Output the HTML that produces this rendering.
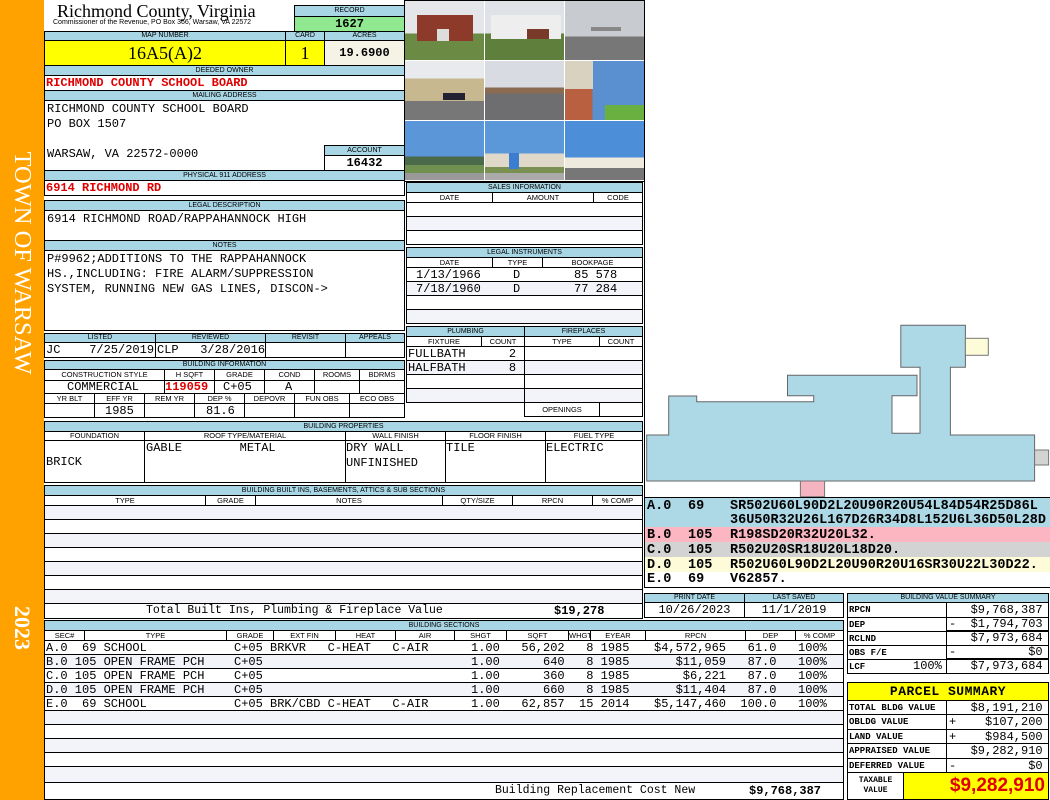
<!DOCTYPE html>
<html><head><meta charset="utf-8"><style>
*{margin:0;padding:0}
body{width:1050px;height:800px;position:relative;background:#fff;overflow:hidden;font-family:"Liberation Sans",sans-serif}
.a{position:absolute;box-sizing:border-box}
.h{position:absolute;box-sizing:border-box;background:#a9d6e5;border:1px solid #000;font-size:7px;text-align:center;white-space:nowrap;overflow:hidden}
.s{position:absolute;box-sizing:border-box;background:#fff;border:1px solid #000;font-size:7.5px;text-align:center;white-space:nowrap;overflow:hidden}
.b{position:absolute;box-sizing:border-box;border:1px solid #000;background:#fff}
.m{position:absolute;font-family:"Liberation Mono",monospace;font-size:12px;white-space:pre;line-height:14px}
.g{background:#f3f3fa}
.red{color:#e00000;font-weight:bold}
.ph{position:absolute;overflow:hidden}
.lg{position:absolute;font-family:"Liberation Mono",monospace;font-size:13.5px;font-weight:bold;white-space:pre;line-height:13px}
</style></head><body>

<div class="a" style="left:0;top:0;width:44px;height:800px;background:#ffa200"></div>
<div class="a" style="left:22px;top:263px;width:260px;height:26px;margin-left:-130px;margin-top:-13px;transform:rotate(90deg);color:#fff;font:24.5px 'Liberation Serif',serif;text-align:center;line-height:26px;white-space:nowrap">TOWN OF WARSAW</div>
<div class="a" style="left:22px;top:628px;width:70px;height:26px;margin-left:-35px;margin-top:-13px;transform:rotate(90deg);color:#fff;font:bold 22px 'Liberation Serif',serif;text-align:center;line-height:26px">2023</div>

<div class="a" style="left:57px;top:1px;font:18px 'Liberation Serif',serif;white-space:nowrap">Richmond County, Virginia</div>
<div class="a" style="left:53px;top:19px;font:7px 'Liberation Sans',sans-serif;white-space:nowrap">Commissioner of the Revenue, PO Box 366, Warsaw, VA 22572</div>
<div class="h" style="left:294px;top:5px;width:111px;height:12px;line-height:10px">RECORD</div>
<div class="b" style="left:294px;top:16px;width:111px;height:16px;background:#90e890;text-align:center;font:bold 12px/14px 'Liberation Mono',monospace">1627</div>

<div class="h" style="left:44px;top:31px;width:242px;height:10px;line-height:8px">MAP NUMBER</div>
<div class="h" style="left:285px;top:31px;width:40px;height:10px;line-height:8px">CARD</div>
<div class="h" style="left:324px;top:31px;width:81px;height:10px;line-height:8px">ACRES</div>
<div class="b" style="left:44px;top:40px;width:242px;height:26px;background:#ffff00;text-align:center;font:18px/24px 'Liberation Serif',serif">16A5(A)2</div>
<div class="b" style="left:285px;top:40px;width:40px;height:26px;background:#ffff00;text-align:center;font:18px/24px 'Liberation Serif',serif">1</div>
<div class="b" style="left:324px;top:40px;width:81px;height:26px;background:#f5f3e6;text-align:center;font:bold 12px/24px 'Liberation Mono',monospace">19.6900</div>

<div class="h" style="left:44px;top:65px;width:361px;height:11px;line-height:9px">DEEDED OWNER</div>
<div class="b" style="left:44px;top:75px;width:361px;height:16px"></div>
<div class="m red" style="left:46px;top:76px">RICHMOND COUNTY SCHOOL BOARD</div>
<div class="h" style="left:44px;top:90px;width:361px;height:11px;line-height:9px">MAILING ADDRESS</div>
<div class="b" style="left:44px;top:100px;width:361px;height:71px"></div>
<div class="m" style="left:47px;top:102px;line-height:15px">RICHMOND COUNTY SCHOOL BOARD
PO BOX 1507

WARSAW, VA 22572-0000</div>
<div class="h" style="left:324px;top:145px;width:81px;height:11px;line-height:9px">ACCOUNT</div>
<div class="b" style="left:324px;top:155px;width:81px;height:16px;text-align:center;font:bold 12px/14px 'Liberation Mono',monospace">16432</div>
<div class="h" style="left:44px;top:170px;width:361px;height:11px;line-height:9px">PHYSICAL 911 ADDRESS</div>
<div class="b" style="left:44px;top:180px;width:361px;height:16px"></div>
<div class="m red" style="left:46px;top:181px">6914 RICHMOND RD</div>

<div class="h" style="left:44px;top:200px;width:361px;height:11px;line-height:9px">LEGAL DESCRIPTION</div>
<div class="b" style="left:44px;top:210px;width:361px;height:31px"></div>
<div class="m" style="left:47px;top:212px">6914 RICHMOND ROAD/RAPPAHANNOCK HIGH</div>
<div class="h" style="left:44px;top:240px;width:361px;height:11px;line-height:9px">NOTES</div>
<div class="b" style="left:44px;top:250px;width:361px;height:81px"></div>
<div class="m" style="left:47px;top:252px;line-height:15px">P#9962;ADDITIONS TO THE RAPPAHANNOCK
HS.,INCLUDING: FIRE ALARM/SUPPRESSION
SYSTEM, RUNNING NEW GAS LINES, DISCON-&gt;</div>

<div class="h" style="left:44px;top:333px;width:112px;height:10px;line-height:8px">LISTED</div>
<div class="h" style="left:155px;top:333px;width:111px;height:10px;line-height:8px">REVIEWED</div>
<div class="h" style="left:265px;top:333px;width:81px;height:10px;line-height:8px">REVISIT</div>
<div class="h" style="left:345px;top:333px;width:60px;height:10px;line-height:8px">APPEALS</div>
<div class="b" style="left:44px;top:342px;width:112px;height:16px"></div>
<div class="b" style="left:155px;top:342px;width:111px;height:16px"></div>
<div class="b" style="left:265px;top:342px;width:81px;height:16px"></div>
<div class="b" style="left:345px;top:342px;width:60px;height:16px"></div>
<div class="m" style="left:46px;top:343px">JC    7/25/2019</div>
<div class="m" style="left:157px;top:343px">CLP   3/28/2016</div>

<div class="h" style="left:44px;top:360px;width:361px;height:10px;line-height:8px">BUILDING INFORMATION</div>
<div class="s" style="left:44px;top:369px;width:121px;height:12px;line-height:10px">CONSTRUCTION STYLE</div>
<div class="s" style="left:164px;top:369px;width:51px;height:12px;line-height:10px">H SQFT</div>
<div class="s" style="left:214px;top:369px;width:51px;height:12px;line-height:10px">GRADE</div>
<div class="s" style="left:264px;top:369px;width:51px;height:12px;line-height:10px">COND</div>
<div class="s" style="left:314px;top:369px;width:46px;height:12px;line-height:10px">ROOMS</div>
<div class="s" style="left:359px;top:369px;width:46px;height:12px;line-height:10px">BDRMS</div>
<div class="b" style="left:44px;top:380px;width:121px;height:14px"></div>
<div class="b" style="left:164px;top:380px;width:51px;height:14px"></div>
<div class="b" style="left:214px;top:380px;width:51px;height:14px"></div>
<div class="b" style="left:264px;top:380px;width:51px;height:14px"></div>
<div class="b" style="left:314px;top:380px;width:46px;height:14px"></div>
<div class="b" style="left:359px;top:380px;width:46px;height:14px"></div>
<div class="m" style="left:67px;top:380px">COMMERCIAL</div>
<div class="m red" style="left:165px;top:380px">119059</div>
<div class="m" style="left:223px;top:380px">C+05</div>
<div class="m" style="left:285px;top:380px">A</div>
<div class="s" style="left:44px;top:393px;width:51px;height:11px;line-height:9px">YR BLT</div>
<div class="s" style="left:94px;top:393px;width:51px;height:11px;line-height:9px">EFF YR</div>
<div class="s" style="left:144px;top:393px;width:51px;height:11px;line-height:9px">REM YR</div>
<div class="s" style="left:194px;top:393px;width:51px;height:11px;line-height:9px">DEP %</div>
<div class="s" style="left:244px;top:393px;width:51px;height:11px;line-height:9px">DEPOVR</div>
<div class="s" style="left:294px;top:393px;width:56px;height:11px;line-height:9px">FUN OBS</div>
<div class="s" style="left:349px;top:393px;width:56px;height:11px;line-height:9px">ECO OBS</div>
<div class="b" style="left:44px;top:403px;width:51px;height:15px"></div>
<div class="b" style="left:94px;top:403px;width:51px;height:15px"></div>
<div class="b" style="left:144px;top:403px;width:51px;height:15px"></div>
<div class="b" style="left:194px;top:403px;width:51px;height:15px"></div>
<div class="b" style="left:244px;top:403px;width:51px;height:15px"></div>
<div class="b" style="left:294px;top:403px;width:56px;height:15px"></div>
<div class="b" style="left:349px;top:403px;width:56px;height:15px"></div>
<div class="m" style="left:105px;top:404px">1985</div>
<div class="m" style="left:206px;top:404px">81.6</div>

<div class="a" style="left:404px;top:0;width:242px;height:182px;background:#fff;border:1px solid #000"></div>
<div class="ph" style="left:405px;top:1px;width:79px;height:59px;background:linear-gradient(#e4e6ea 0 55%,#6b8a44 55%)"><div class="a" style="left:12px;top:14px;width:56px;height:26px;background:#8e3a2a"></div><div class="a" style="left:32px;top:28px;width:12px;height:12px;background:#ddd"></div></div>
<div class="ph" style="left:485px;top:1px;width:79px;height:59px;background:linear-gradient(#dfe3e8 0 55%,#5f7f3c 55%)"><div class="a" style="left:6px;top:14px;width:70px;height:24px;background:#eeeeee"></div><div class="a" style="left:42px;top:28px;width:22px;height:10px;background:#7a3a2a"></div></div>
<div class="ph" style="left:565px;top:1px;width:79px;height:59px;background:linear-gradient(#c8ccd0 0 60%,#777 60%)"><div class="a" style="left:26px;top:26px;width:30px;height:4px;background:#888"></div></div>
<div class="ph" style="left:405px;top:61px;width:79px;height:59px;background:linear-gradient(#e8eaee 0 30%,#c8b890 30% 68%,#777 68%)"><div class="a" style="left:38px;top:32px;width:22px;height:7px;background:#223"></div></div>
<div class="ph" style="left:485px;top:61px;width:79px;height:59px;background:linear-gradient(#d8dce2 0 45%,#8a6a50 45% 55%,#6e6e70 55%)"></div>
<div class="ph" style="left:565px;top:61px;width:79px;height:59px;background:linear-gradient(90deg,#b86040 0 35%,#5a90d0 35%)"><div class="a" style="left:0;top:0;width:28px;height:28px;background:#d9d2c0"></div><div class="a" style="left:40px;top:44px;width:39px;height:15px;background:#6ab040"></div></div>
<div class="ph" style="left:405px;top:121px;width:79px;height:59px;background:linear-gradient(#5a96d8 0 60%,#4a6a4a 60% 75%,#709050 75% 88%,#999 88%)"></div>
<div class="ph" style="left:485px;top:121px;width:79px;height:59px;background:linear-gradient(#5b98da 0 55%,#e0d8c8 55% 78%,#7a9050 78% 88%,#aaa 88%)"><div class="a" style="left:24px;top:32px;width:10px;height:16px;background:#3b7dd0"></div></div>
<div class="ph" style="left:565px;top:121px;width:79px;height:59px;background:linear-gradient(#4d8ed8 0 62%,#eeeade 62% 80%,#777 80%)"></div>

<div class="h" style="left:406px;top:182px;width:237px;height:11px;line-height:9px">SALES INFORMATION</div>
<div class="s" style="left:406px;top:192px;width:87px;height:11px;line-height:9px">DATE</div>
<div class="s" style="left:492px;top:192px;width:102px;height:11px;line-height:9px">AMOUNT</div>
<div class="s" style="left:593px;top:192px;width:50px;height:11px;line-height:9px">CODE</div>
<div class="b" style="left:406px;top:202px;width:237px;height:15px"></div>
<div class="b g" style="left:406px;top:216px;width:237px;height:15px"></div>
<div class="b" style="left:406px;top:230px;width:237px;height:15px"></div>

<div class="h" style="left:406px;top:247px;width:237px;height:11px;line-height:9px">LEGAL INSTRUMENTS</div>
<div class="s" style="left:406px;top:257px;width:87px;height:11px;line-height:9px">DATE</div>
<div class="s" style="left:492px;top:257px;width:51px;height:11px;line-height:9px">TYPE</div>
<div class="s" style="left:542px;top:257px;width:101px;height:11px;line-height:9px">BOOKPAGE</div>
<div class="b" style="left:406px;top:267px;width:237px;height:15px"></div>
<div class="b g" style="left:406px;top:281px;width:237px;height:15px"></div>
<div class="b" style="left:406px;top:295px;width:237px;height:15px"></div>
<div class="b g" style="left:406px;top:309px;width:237px;height:15px"></div>
<div class="m" style="left:416px;top:268px">1/13/1966</div><div class="m" style="left:513px;top:268px">D</div><div class="m" style="left:574px;top:268px">85 578</div>
<div class="m" style="left:416px;top:282px">7/18/1960</div><div class="m" style="left:513px;top:282px">D</div><div class="m" style="left:574px;top:282px">77 284</div>

<div class="h" style="left:406px;top:326px;width:119px;height:11px;line-height:9px">PLUMBING</div>
<div class="h" style="left:524px;top:326px;width:119px;height:11px;line-height:9px">FIREPLACES</div>
<div class="s" style="left:406px;top:336px;width:76px;height:11px;line-height:9px">FIXTURE</div>
<div class="s" style="left:481px;top:336px;width:44px;height:11px;line-height:9px">COUNT</div>
<div class="s" style="left:524px;top:336px;width:76px;height:11px;line-height:9px">TYPE</div>
<div class="s" style="left:599px;top:336px;width:44px;height:11px;line-height:9px">COUNT</div>
<div class="b" style="left:406px;top:346px;width:119px;height:15px"></div>
<div class="b g" style="left:406px;top:360px;width:119px;height:15px"></div>
<div class="b" style="left:406px;top:374px;width:119px;height:15px"></div>
<div class="b g" style="left:406px;top:388px;width:119px;height:15px"></div>
<div class="b" style="left:524px;top:346px;width:119px;height:15px"></div>
<div class="b g" style="left:524px;top:360px;width:119px;height:15px"></div>
<div class="b" style="left:524px;top:374px;width:119px;height:15px"></div>
<div class="b g" style="left:524px;top:388px;width:119px;height:15px"></div>
<div class="s" style="left:524px;top:402px;width:76px;height:15px;line-height:13px">OPENINGS</div>
<div class="b" style="left:599px;top:402px;width:44px;height:15px"></div>
<div class="m" style="left:408px;top:347px">FULLBATH      2</div>
<div class="m" style="left:408px;top:361px">HALFBATH      8</div>

<div class="h" style="left:44px;top:421px;width:599px;height:11px;line-height:9px">BUILDING PROPERTIES</div>
<div class="s" style="left:44px;top:431px;width:101px;height:10px;line-height:8px">FOUNDATION</div>
<div class="s" style="left:144px;top:431px;width:202px;height:10px;line-height:8px">ROOF TYPE/MATERIAL</div>
<div class="s" style="left:345px;top:431px;width:101px;height:10px;line-height:8px">WALL FINISH</div>
<div class="s" style="left:445px;top:431px;width:101px;height:10px;line-height:8px">FLOOR FINISH</div>
<div class="s" style="left:545px;top:431px;width:98px;height:10px;line-height:8px">FUEL TYPE</div>
<div class="b" style="left:44px;top:440px;width:101px;height:43px"></div>
<div class="b" style="left:144px;top:440px;width:202px;height:43px"></div>
<div class="b" style="left:345px;top:440px;width:101px;height:43px"></div>
<div class="b" style="left:445px;top:440px;width:101px;height:43px"></div>
<div class="b" style="left:545px;top:440px;width:98px;height:43px"></div>
<div class="m" style="left:46px;top:455px">BRICK</div>
<div class="m" style="left:146px;top:441px">GABLE        METAL</div>
<div class="m" style="left:346px;top:441px;line-height:15px">DRY WALL
UNFINISHED</div>
<div class="m" style="left:446px;top:441px">TILE</div>
<div class="m" style="left:546px;top:441px">ELECTRIC</div>

<div class="h" style="left:44px;top:485px;width:599px;height:11px;line-height:9px">BUILDING BUILT INS, BASEMENTS, ATTICS &amp; SUB SECTIONS</div>
<div class="s" style="left:44px;top:495px;width:162px;height:11px;line-height:9px">TYPE</div>
<div class="s" style="left:205px;top:495px;width:51px;height:11px;line-height:9px">GRADE</div>
<div class="s" style="left:255px;top:495px;width:188px;height:11px;line-height:9px">NOTES</div>
<div class="s" style="left:442px;top:495px;width:71px;height:11px;line-height:9px">QTY/SIZE</div>
<div class="s" style="left:512px;top:495px;width:81px;height:11px;line-height:9px">RPCN</div>
<div class="s" style="left:592px;top:495px;width:51px;height:11px;line-height:9px">% COMP</div>
<div class="b g" style="left:44px;top:505px;width:599px;height:15px"></div>
<div class="b" style="left:44px;top:519px;width:599px;height:15px"></div>
<div class="b g" style="left:44px;top:533px;width:599px;height:15px"></div>
<div class="b" style="left:44px;top:547px;width:599px;height:15px"></div>
<div class="b g" style="left:44px;top:561px;width:599px;height:15px"></div>
<div class="b" style="left:44px;top:575px;width:599px;height:15px"></div>
<div class="b g" style="left:44px;top:589px;width:599px;height:15px"></div>
<div class="b" style="left:44px;top:603px;width:599px;height:16px"></div>
<div class="m" style="left:146px;top:604px;font-size:11.5px">Total Built Ins, Plumbing &amp; Fireplace Value</div>
<div class="m" style="left:554px;top:604px;font-weight:bold">$19,278</div>

<div class="h" style="left:44px;top:620px;width:800px;height:11px;line-height:9px">BUILDING SECTIONS</div>
<div class="s" style="left:44px;top:630px;width:41px;height:11px;line-height:9px">SEC#</div>
<div class="s" style="left:84px;top:630px;width:143px;height:11px;line-height:9px">TYPE</div>
<div class="s" style="left:226px;top:630px;width:48px;height:11px;line-height:9px">GRADE</div>
<div class="s" style="left:273px;top:630px;width:63px;height:11px;line-height:9px">EXT FIN</div>
<div class="s" style="left:335px;top:630px;width:61px;height:11px;line-height:9px">HEAT</div>
<div class="s" style="left:395px;top:630px;width:60px;height:11px;line-height:9px">AIR</div>
<div class="s" style="left:454px;top:630px;width:53px;height:11px;line-height:9px">SHGT</div>
<div class="s" style="left:506px;top:630px;width:63px;height:11px;line-height:9px">SQFT</div>
<div class="s" style="left:568px;top:630px;width:23px;height:11px;line-height:9px">WHGT</div>
<div class="s" style="left:590px;top:630px;width:56px;height:11px;line-height:9px">EYEAR</div>
<div class="s" style="left:645px;top:630px;width:101px;height:11px;line-height:9px">RPCN</div>
<div class="s" style="left:745px;top:630px;width:51px;height:11px;line-height:9px">DEP</div>
<div class="s" style="left:795px;top:630px;width:49px;height:11px;line-height:9px">% COMP</div>
<div class="b" style="left:44px;top:640px;width:800px;height:15px"></div>
<div class="b g" style="left:44px;top:654px;width:800px;height:15px"></div>
<div class="b" style="left:44px;top:668px;width:800px;height:15px"></div>
<div class="b g" style="left:44px;top:682px;width:800px;height:15px"></div>
<div class="b" style="left:44px;top:696px;width:800px;height:15px"></div>
<div class="b g" style="left:44px;top:710px;width:800px;height:15px"></div>
<div class="b" style="left:44px;top:724px;width:800px;height:15px"></div>
<div class="b g" style="left:44px;top:738px;width:800px;height:15px"></div>
<div class="b" style="left:44px;top:752px;width:800px;height:15px"></div>
<div class="b g" style="left:44px;top:766px;width:800px;height:17px"></div>
<div class="b" style="left:44px;top:782px;width:800px;height:18px"></div>
<div class="m" style="left:46px;top:641px">A.0  69 SCHOOL</div>
<div class="m" style="left:46px;top:655px">B.0 105 OPEN FRAME PCH</div>
<div class="m" style="left:46px;top:669px">C.0 105 OPEN FRAME PCH</div>
<div class="m" style="left:46px;top:683px">D.0 105 OPEN FRAME PCH</div>
<div class="m" style="left:46px;top:697px">E.0  69 SCHOOL</div>
<div class="m" style="left:234px;top:641px">C+05 BRKVR   C-HEAT   C-AIR</div>
<div class="m" style="left:234px;top:655px">C+05</div>
<div class="m" style="left:234px;top:669px">C+05</div>
<div class="m" style="left:234px;top:683px">C+05</div>
<div class="m" style="left:234px;top:697px">C+05 BRK/CBD C-HEAT   C-AIR</div>
<div class="m" style="left:471px;top:641px">1.00   56,202   8 1985</div>
<div class="m" style="left:471px;top:655px">1.00      640   8 1985</div>
<div class="m" style="left:471px;top:669px">1.00      360   8 1985</div>
<div class="m" style="left:471px;top:683px">1.00      660   8 1985</div>
<div class="m" style="left:471px;top:697px">1.00   62,857  15 2014</div>
<div class="m" style="left:654px;top:641px">$4,572,965   61.0   100%</div>
<div class="m" style="left:654px;top:655px">   $11,059   87.0   100%</div>
<div class="m" style="left:654px;top:669px">    $6,221   87.0   100%</div>
<div class="m" style="left:654px;top:683px">   $11,404   87.0   100%</div>
<div class="m" style="left:654px;top:697px">$5,147,460  100.0   100%</div>
<div class="m" style="left:495px;top:784px;font-size:11.5px">Building Replacement Cost New</div>
<div class="m" style="left:749px;top:784px;font-weight:bold">$9,768,387</div>

<div class="b" style="left:644px;top:0;width:406px;height:498px;border-right:none;border-top:none"></div>
<svg class="a" style="left:0;top:0" width="1050" height="500">
<polygon points="646.7,481 646.7,435 668.7,435 668.7,396 696.7,396 696.7,401.7 813.7,401.7 813.7,395.7 787.5,395.7 787.5,375.3 917,375.3 917,395.7 892,395.7 892,433.3 920,433.3 920,367.3 900.8,367.3 900.8,325.3 965.4,325.3 965.4,367.3 950.4,367.3 950.4,435 1034.6,435 1034.6,481" fill="#add8e6" stroke="#666" stroke-width="1"/>
<rect x="965.4" y="338.3" width="22.9" height="17" fill="#fdfbd8" stroke="#777"/>
<rect x="1034.6" y="450" width="14" height="15" fill="#d3d3d3" stroke="#777"/>
<rect x="800.4" y="481" width="24.2" height="15.7" fill="#f4b4c0" stroke="#777"/>
</svg>

<div class="a" style="left:645px;top:498px;width:405px;height:29px;background:#add8e6"></div>
<div class="a" style="left:645px;top:527px;width:405px;height:15px;background:#fbb6c1"></div>
<div class="a" style="left:645px;top:542px;width:405px;height:15px;background:#d3d3d3"></div>
<div class="a" style="left:645px;top:557px;width:405px;height:15px;background:#fdfbd8"></div>
<div class="a" style="left:644px;top:497px;width:406px;height:91px;border:1px solid #000;border-right:none"></div>
<div class="lg" style="left:647px;top:500px">A.0</div><div class="lg" style="left:688px;top:500px">69</div><div class="lg" style="left:730px;top:500px">SR502U60L90D2L20U90R20U54L84D54R25D86L</div>
<div class="lg" style="left:730px;top:514px">36U50R32U26L167D26R34D8L152U6L36D50L28D</div>
<div class="lg" style="left:647px;top:529px">B.0</div><div class="lg" style="left:688px;top:529px">105</div><div class="lg" style="left:730px;top:529px">R198SD20R32U20L32.</div>
<div class="lg" style="left:647px;top:544px">C.0</div><div class="lg" style="left:688px;top:544px">105</div><div class="lg" style="left:730px;top:544px">R502U20SR18U20L18D20.</div>
<div class="lg" style="left:647px;top:559px">D.0</div><div class="lg" style="left:688px;top:559px">105</div><div class="lg" style="left:730px;top:559px">R502U60L90D2L20U90R20U16SR30U22L30D22.</div>
<div class="lg" style="left:647px;top:573px">E.0</div><div class="lg" style="left:688px;top:573px">69</div><div class="lg" style="left:730px;top:573px">V62857.</div>

<div class="h" style="left:644px;top:593px;width:101px;height:10px;line-height:8px">PRINT DATE</div>
<div class="h" style="left:744px;top:593px;width:100px;height:10px;line-height:8px">LAST SAVED</div>
<div class="b" style="left:644px;top:602px;width:101px;height:16px;text-align:center;font:12px/14px 'Liberation Mono',monospace">10/26/2023</div>
<div class="b" style="left:744px;top:602px;width:100px;height:16px;text-align:center;font:12px/14px 'Liberation Mono',monospace">11/1/2019</div>

<div class="h" style="left:847px;top:593px;width:202px;height:10px;line-height:8px">BUILDING VALUE SUMMARY</div>
<div class="b" style="left:847px;top:602px;width:100px;height:16px"></div><div class="b" style="left:946px;top:602px;width:103px;height:16px"></div>
<div class="b" style="left:847px;top:617px;width:100px;height:15px"></div><div class="b" style="left:946px;top:617px;width:103px;height:15px;border-bottom-width:2px"></div>
<div class="b" style="left:847px;top:631px;width:100px;height:15px"></div><div class="b" style="left:946px;top:631px;width:103px;height:15px"></div>
<div class="b" style="left:847px;top:645px;width:100px;height:15px"></div><div class="b" style="left:946px;top:645px;width:103px;height:15px;border-bottom-width:2px"></div>
<div class="b" style="left:847px;top:659px;width:100px;height:15px"></div><div class="b" style="left:946px;top:659px;width:103px;height:15px"></div>
<div class="m" style="left:849px;top:603px;font-size:9px;font-weight:bold">RPCN</div>
<div class="m" style="left:849px;top:618px;font-size:9px;font-weight:bold">DEP</div>
<div class="m" style="left:849px;top:632px;font-size:9px;font-weight:bold">RCLND</div>
<div class="m" style="left:849px;top:646px;font-size:9px;font-weight:bold">OBS F/E</div>
<div class="m" style="left:849px;top:660px;font-size:9px;font-weight:bold">LCF</div>
<div class="m" style="left:913px;top:659px">100%</div>
<div class="m" style="left:949px;top:603px">   $9,768,387</div>
<div class="m" style="left:949px;top:617px">-  $1,794,703</div>
<div class="m" style="left:949px;top:631px">   $7,973,684</div>
<div class="m" style="left:949px;top:645px">-          $0</div>
<div class="m" style="left:949px;top:659px">   $7,973,684</div>

<div class="b" style="left:847px;top:682px;width:202px;height:19px;background:#ffff00;text-align:center;font:bold 13px/17px 'Liberation Mono',monospace;letter-spacing:0.5px">PARCEL  SUMMARY</div>
<div class="b" style="left:847px;top:700px;width:100px;height:15px"></div><div class="b" style="left:946px;top:700px;width:103px;height:15px"></div>
<div class="b" style="left:847px;top:714px;width:100px;height:16px"></div><div class="b" style="left:946px;top:714px;width:103px;height:16px"></div>
<div class="b" style="left:847px;top:729px;width:100px;height:15px"></div><div class="b" style="left:946px;top:729px;width:103px;height:15px"></div>
<div class="b" style="left:847px;top:743px;width:100px;height:16px"></div><div class="b" style="left:946px;top:743px;width:103px;height:16px"></div>
<div class="b" style="left:847px;top:758px;width:100px;height:15px"></div><div class="b" style="left:946px;top:758px;width:103px;height:15px"></div>
<div class="m" style="left:849px;top:701px;font-size:9px;font-weight:bold">TOTAL BLDG VALUE</div>
<div class="m" style="left:849px;top:715px;font-size:9px;font-weight:bold">OBLDG VALUE</div>
<div class="m" style="left:849px;top:730px;font-size:9px;font-weight:bold">LAND VALUE</div>
<div class="m" style="left:849px;top:744px;font-size:9px;font-weight:bold">APPRAISED VALUE</div>
<div class="m" style="left:849px;top:759px;font-size:9px;font-weight:bold">DEFERRED VALUE</div>
<div class="m" style="left:949px;top:701px">   $8,191,210</div>
<div class="m" style="left:949px;top:715px">+    $107,200</div>
<div class="m" style="left:949px;top:730px">+    $984,500</div>
<div class="m" style="left:949px;top:744px">   $9,282,910</div>
<div class="m" style="left:949px;top:759px">-          $0</div>
<div class="b" style="left:847px;top:772px;width:57px;height:28px;text-align:center;font:bold 8px/10px 'Liberation Mono',monospace;padding-top:3px">TAXABLE<br>VALUE</div>
<div class="b" style="left:903px;top:772px;width:146px;height:28px;background:#ffff00;text-align:right;padding-right:3px;color:#e00000;font:bold 19px/26px 'Liberation Sans',sans-serif">$9,282,910</div>

</body></html>
